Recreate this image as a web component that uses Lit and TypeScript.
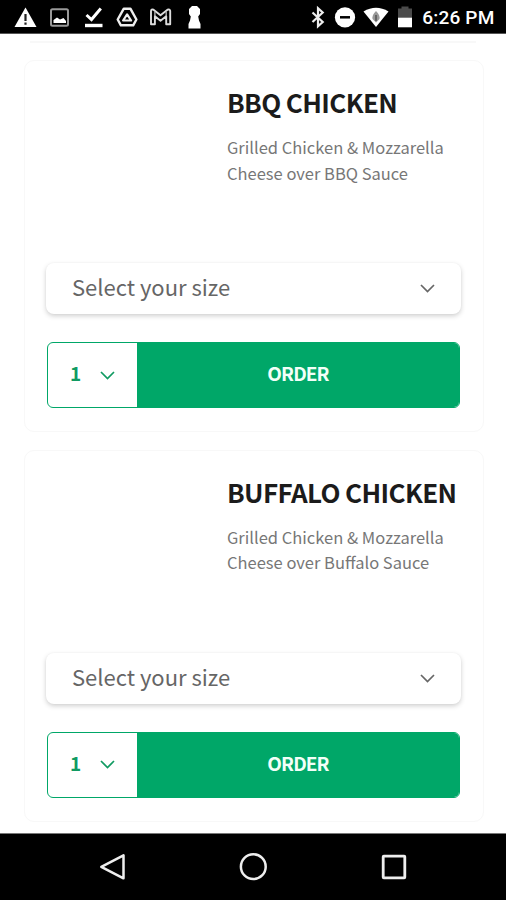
import { LitElement, html, css, svg } from "lit";
import { customElement, property } from "lit/decorators.js";

@customElement("status-bar")
class StatusBar extends LitElement {
  static styles = css`
    :host { display: flex; justify-content: space-between; height: 34px; box-sizing: border-box;
      background: #000; border-bottom: 1px solid #555; padding: 0 11.5px 0 14px; color: #fff; }
    .group { display: flex; align-items: center; height: 34px; }
    .left { gap: 11px; }
    .right { gap: 7px; }
    svg { display: block; flex: none; overflow: visible; }
    .bluetooth { margin-right: -1px; transform: translateX(-1px); }
    .time { font: 500 19px/34px Roboto, "Noto Sans", sans-serif; letter-spacing: 0.2px; margin-left: 1px; padding-top: 2px; white-space: nowrap; }
  `;
  render() {
    return html`
      <div class="group left">
        <svg width="23" height="34" viewBox="0 0 23 34"><path d="M11.5 7.5 22.5 27H.5Z" fill="#fff"/><path d="M11.5 14v7M11.5 22.5v2.3" stroke="#222" stroke-width="2.2"/></svg>
        <svg width="23" height="34" viewBox="48 0 23 34"><rect x="51" y="9.2" width="17" height="16.6" rx="1.5" fill="none" stroke="#999" stroke-width="2"/><path d="M53.5 23v-3l3.5-2.5 3 2 3.5-1.5 2.5 3v2Z" fill="#fff"/></svg>
        <svg width="23" height="34" viewBox="82 0 23 34"><path d="m86.5 15 5 4.5 9.3-11" fill="none" stroke="#fff" stroke-width="3"/><path d="M85 25.5h17.5" stroke="#fff" stroke-width="3.4"/></svg>
        <svg width="23" height="34" viewBox="116 0 23 34"><path d="M123.8 8.7h6.6l6 10.8-3.2 5.8h-12.3l-3.2-5.8Z" fill="none" stroke="#eee" stroke-width="2.4" stroke-linejoin="round"/><path d="m127.1 14.3 4 6.2h-8Z" fill="none" stroke="#eee" stroke-width="2.2" stroke-linejoin="round"/></svg>
        <svg width="23" height="34" viewBox="150 0 23 34"><path d="M151 24.3V11q.2-2 2.5-1.3l7 5.6 7-5.6q2.300-.7 2.700 1.300v13.300h-4v-8l-5.700 4.400-5.600-4.400v8Z" fill="none" stroke="#ddd" stroke-width="1.9" stroke-linejoin="round"/><path d="M154.9 16.3v-4.5M166.2 16.3v-4.5" stroke="#bbb" stroke-width="1.3"/></svg>
        <svg width="23" height="34" viewBox="184.5 0 23 34"><path d="M192.5 6h5l3 3v5l-1.800 2.500.8 4 1.500 3.500v4.500h-12V24l1.500-3.500.8-4-1.800-2.500V9Z" fill="#fff"/></svg>
      </div>
      <div class="group right">
        <svg class="bluetooth" width="18" height="34" viewBox="307 0 18 34"><path d="m310.5 12.500 10.200 9.500-4.700 4.200V8.300l4.700 4.200-10.200 9.500" fill="none" stroke="#eee" stroke-width="2.200"/></svg>
        <svg width="22" height="34" viewBox="333.5 0 22 34"><circle cx="344.500" cy="17.400" r="10.100" fill="#fff"/><path d="M339.500 17.300h10" stroke="#000" stroke-width="2.500"/></svg>
        <svg width="26" height="34" viewBox="363 0 26 34"><path d="M363.500 11.500q12.500-7.500 25 0L376 27Z" fill="#fff"/><path d="M376 11q4.500 4.500 3.500 8l-3.500 3.500-3.500-3.500q-1-3.500 3.500-8Z" fill="#999"/><path d="M376 15v6" stroke="#555" stroke-width="1.500"/></svg>
        <svg width="18" height="34" viewBox="396 0 18 34"><path d="M398 8.500h3.500v-2h7v2h3.500V18h-14Z" fill="#4b4b4b"/><path d="M398 17.700h14v9.600h-14Z" fill="#fff"/></svg>
        <span class="time">6:26 PM</span>
      </div>`;
  }
}

const chevron = svg`<path d="m1 1 6.500 6.500L14 1" fill="none" stroke="currentColor" stroke-width="1.700"/>`;

@customElement("menu-card")
class MenuCard extends LitElement {
  @property() name = "";
  @property({ type: Array }) lines: string[] = [];
  static styles = css`
    :host { display: flex; flex-direction: column; box-sizing: border-box; width: 460px; height: 372px;
      border: 1.5px solid #f8f8f8; border-radius: 10px; padding: 0 22px 0 21px; background: #fff; }
    .info { height: 202px; padding: 22px 0 0 181px; box-sizing: border-box; white-space: nowrap; }
    h2 { margin: 0; font-size: 26px; line-height: 38px; font-weight: 700; color: #1b1b1b; letter-spacing: -.62px; }
    p { margin: 14px 0 0; font-size: 16.5px; line-height: 25.5px; color: #777; }
    .select { display: flex; align-items: center; justify-content: space-between; height: 51px; flex: none;
      border-radius: 8px; padding: 0 26px; font-size: 22px; color: #666; background: #fff;
      box-shadow: 0 2px 5px rgba(0,0,0,.19), 0 0 2px rgba(0,0,0,.03); }
    span, .order { padding-bottom: 5px; }
    .row { display: flex; height: 66px; flex: none; margin: 28px 1px 0 1px; box-sizing: border-box;
      border: 1.5px solid #00a768; border-radius: 6px; overflow: hidden; color: #119b62; }
    .qty { width: 89px; display: flex; align-items: center; box-sizing: border-box; padding-left: 22px; gap: 19px; font-weight: 700; font-size: 19px; }
    .order { flex: 1; display: grid; place-items: center; background: #00a768; color: #f2fff8; font-weight: 700; font-size: 19px; letter-spacing: -.9px; }
    svg { display: block; }
  `;
  render() {
    return html`
      <div class="info"><h2>${this.name}</h2><p>${this.lines[0]}<br>${this.lines[1]}</p></div>
      <div class="select"><span>Select your size</span><svg width="15" height="9" viewBox="0 0 15 9">${chevron}</svg></div>
      <div class="row"><div class="qty"><span>1</span><svg width="15" height="9" viewBox="0 0 15 9">${chevron}</svg></div><div class="order">ORDER</div></div>`;
  }
}

@customElement("app-root")
class AppRoot extends LitElement {
  static styles = css`
    :host { display: flex; flex-direction: column; width: 506px; height: 900px; overflow: hidden; background: #fff;
      font-family: "Noto Sans CJK JP", "Noto Sans", sans-serif; }
    main { flex: 1; display: flex; flex-direction: column; padding: 0 24px; gap: 17.5px; }
    .previous { height: 9px; margin: 0 6px -.5px; box-sizing: border-box; border-bottom: 2px solid #f8f8f8; flex: none; }
    nav { height: 67px; flex: none; box-sizing: border-box; border-top: 1px solid #777; background: #000;
      display: flex; justify-content: space-between; align-items: center; padding: 0 98px; }
    nav svg { display: block; }
  `;
  render() {
    return html`
      <status-bar></status-bar>
      <main>
        <div class="previous"></div>
        <menu-card name="BBQ CHICKEN" .lines=${["Grilled Chicken & Mozzarella", "Cheese over BBQ Sauce"]}></menu-card>
        <menu-card name="BUFFALO CHICKEN" .lines=${["Grilled Chicken & Mozzarella", "Cheese over Buffalo Sauce"]}></menu-card>
      </main>
      <nav>
        <svg width="30" height="30" viewBox="0 0 30 30" fill="none" stroke="#eee" stroke-width="2.5"><path d="M25.5 3.3v23L3.300 14.800Z" stroke-linejoin="round"/></svg>
        <svg width="30" height="30" viewBox="0 0 30 30" fill="none" stroke="#eee" stroke-width="2.5"><circle cx="15.300" cy="14.700" r="12.400"/></svg>
        <svg width="30" height="30" viewBox="0 0 30 30" fill="none" stroke="#eee" stroke-width="2.8"><rect x="5.200" y="4.200" width="21.600" height="21.600" rx=".6"/></svg>
      </nav>`;
  }
}
